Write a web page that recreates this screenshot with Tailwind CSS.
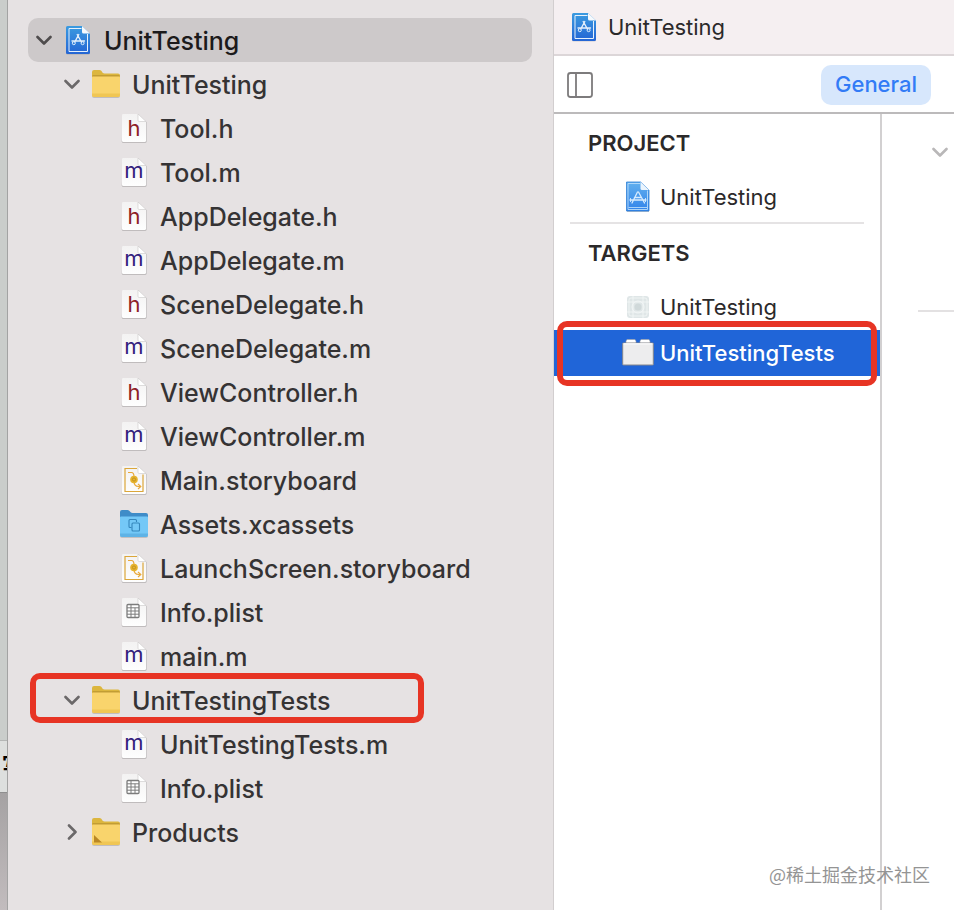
<!DOCTYPE html>
<html lang="en">
<head>
    <meta charset="UTF-8">
    <meta name="viewport" content="width=device-width, initial-scale=1.0">
    <title>UnitTesting</title>

    <!-- Tailwind CSS CDN -->
    <script src="https://cdn.jsdelivr.net/npm/@tailwindcss/browser@4"></script>
</head>
<body class="flex min-h-screen overflow-hidden bg-white font-[Inter,'Noto_Sans_CJK_SC',sans-serif] text-[#2b292a]">

    <!-- Shared icons -->
    <svg class="absolute size-0" aria-hidden="true">
        <defs>
            <linearGradient id="blueFill" x1="0" y1="0" x2="0" y2="1">
                <stop offset="0" stop-color="#3b9be0" />
                <stop offset="1" stop-color="#2465d4" />
            </linearGradient>
            <linearGradient id="lightBlueFill" x1="0" y1="0" x2="0" y2="1">
                <stop offset="0" stop-color="#62b0ee" />
                <stop offset="1" stop-color="#3183ea" />
            </linearGradient>
            <linearGradient id="pageFill" x1="0" y1="0" x2="0" y2="1">
                <stop offset="0" stop-color="#f3f2f2" />
                <stop offset="1" stop-color="#fefefe" />
            </linearGradient>
        </defs>

        <symbol id="chevron" viewBox="0 0 16 16">
            <path d="M1.5 5 L8 11.5 L14.5 5" fill="none" stroke="currentColor" stroke-width="2.6" stroke-linecap="round" stroke-linejoin="round" />
        </symbol>

        <symbol id="project" viewBox="0 0 28 30">
            <path d="M3.5 1.5 H18 L26 9 V28 a1.5 1.5 0 0 1 -1.5 1.5 H3.5 a1.5 1.5 0 0 1 -1.5 -1.5 V3 a1.5 1.5 0 0 1 1.5 -1.5z" fill="#000" opacity=".15" />
            <path d="M3.5 1 H18 L26 8.5 V27.5 a1.5 1.5 0 0 1 -1.5 1.5 H3.5 a1.5 1.5 0 0 1 -1.5 -1.5 V2.5 a1.5 1.5 0 0 1 1.5 -1.5z" fill="url(#blueFill)" />
            <path d="M17.5 3.5 H5 V26.5 H23.5 V9" fill="none" stroke="#e6f1fc" stroke-width="1" />
            <path d="M18 1 L26 8.5 H19.5 a1.5 1.5 0 0 1 -1.5 -1.5z" fill="#f5f9fd" />
            <path d="M14.8 9.5 L10.2 18 M13.2 9.5 L18 18 M8 16 H20.5" fill="none" stroke="#e4f0fc" stroke-width="1.4" stroke-linecap="round" />
            <circle cx="9.8" cy="18.2" r="1.5" fill="#2f7dda" stroke="#e4f0fc" />
            <circle cx="18.6" cy="18.2" r="1.5" fill="#2f7dda" stroke="#e4f0fc" />
        </symbol>

        <symbol id="projectSmall" viewBox="0 0 32 32">
            <path d="M5 2 H18.5 L27 9.5 V31 H5z" fill="#000" opacity=".2" />
            <path d="M4.5 1 H18.5 L27 9 V30 H4.5z" fill="url(#lightBlueFill)" stroke="#2f7fd6" stroke-width=".8" />
            <path d="M18 2.5 H6 V28.5 H25.5 V9.5 M6.5 26.5 H25" fill="none" stroke="#b9dcfb" stroke-width=".9" />
            <path d="M18.5 1 L27 9 H20 a1.5 1.5 0 0 1 -1.5 -1.5z" fill="#eaf4fd" />
            <path d="M15.5 11 L10 22 M16.5 11 L22.5 22 M8 19 H24 M12.5 16.5 H19.5" fill="none" stroke="#d7ebfd" stroke-width="1.3" stroke-linecap="round" />
            <path d="M8.5 17 V21 M23.5 17 V21" stroke="#d7ebfd" stroke-width=".9" />
        </symbol>

        <symbol id="folder" viewBox="0 0 28 28">
            <path d="M0 6 H28 V26 a2 2 0 0 1 -2 2 H2 a2 2 0 0 1 -2 -2z" fill="#000" opacity=".16" />
            <path d="M0 2 a2 2 0 0 1 2 -2 H7.5 c2.5 0 2.5 3.5 5 3.5 H26 a2 2 0 0 1 2 2 V12 H0z" fill="#dcb63e" />
            <path d="M.5 6 H27.5" stroke="#a8842a" />
            <path d="M0 7.5 a1 1 0 0 1 1 -1 H27 a1 1 0 0 1 1 1 V25 a2 2 0 0 1 -2 2 H2 a2 2 0 0 1 -2 -2z" fill="#f9d46c" />
            <path d="M0 23.5 H28 V25 a2 2 0 0 1 -2 2 H2 a2 2 0 0 1 -2 -2z" fill="#f0c654" />
        </symbol>

        <symbol id="assets" viewBox="0 0 28 28">
            <path d="M0 6 H28 V26 a2 2 0 0 1 -2 2 H2 a2 2 0 0 1 -2 -2z" fill="#000" opacity=".15" />
            <path d="M0 2 a2 2 0 0 1 2 -2 H7.5 c2.5 0 2.5 3 5 3 H26 a2 2 0 0 1 2 2 V12 H0z" fill="#3f8cc8" />
            <path d="M0 7.5 a1 1 0 0 1 1 -1 H27 a1 1 0 0 1 1 1 V25 a2 2 0 0 1 -2 2 H2 a2 2 0 0 1 -2 -2z" fill="#74c8f7" />
            <path d="M0 23.5 H28 V25 a2 2 0 0 1 -2 2 H2 a2 2 0 0 1 -2 -2z" fill="#5fb3e6" />
            <path d="M11.5 17.500 H10 a1 1 0 0 1 -1 -1 V10.500 a1 1 0 0 1 1 -1 H15.500 a1 1 0 0 1 1 1 V12" fill="none" stroke="#3587bd" stroke-width="1.1" />
            <rect x="12" y="13" width="7.5" height="8" rx="1" fill="none" stroke="#3587bd" stroke-width="1.1" />
        </symbol>

        <symbol id="page" viewBox="0 0 28 30">
            <path d="M3 2 H18.5 L26.5 9 V28.5 a1.2 1.2 0 0 1 -1.2 1.2 H3 a1.2 1.2 0 0 1 -1.2 -1.2z" fill="#000" opacity=".22" />
            <path d="M3.2 1 H18 L26 8.5 V27.8 a1.2 1.2 0 0 1 -1.2 1.2 H3.2 a1.2 1.2 0 0 1 -1.2 -1.2 V2.2 a1.2 1.2 0 0 1 1.2 -1.2z" fill="url(#pageFill)" />
            <path d="M18 1 L26 8.5 H19.2 a1.2 1.2 0 0 1 -1.2 -1.2z" fill="#fff" stroke="#c9c8c8" stroke-width=".6" />
        </symbol>

        <symbol id="storyboard" viewBox="0 0 28 30">
            <use href="#page" />
            <path d="M17 3.5 H5 V26.5 H23 V9.5" fill="none" stroke="#dba63a" stroke-width="1.2" />
            <path d="M8 7.5 H11.5 Q14 7.5 14 12 M14 16 Q14 21.5 18.5 21.5 H20 M18 19 L20.8 21.5 L18 24" fill="none" stroke="#e8a93c" stroke-width="1.2" />
            <circle cx="14" cy="14.5" r="3.8" fill="#e6b32e" />
            <circle cx="14" cy="14.5" r="1.6" fill="none" stroke="#b98a1c" stroke-width=".8" />
        </symbol>

        <symbol id="plist" viewBox="0 0 28 30">
            <use href="#page" />
            <rect x="7" y="7.5" width="12" height="13" rx="1" fill="#fff" stroke="#7c7c7c" stroke-width="1.3" />
            <path d="M7 10.8 H19 M7 14 H19 M7 17.2 H19 M11 7.5 V20.5 M15 10.8 V20.5" stroke="#7c7c7c" stroke-width="1" />
        </symbol>

        <symbol id="appTarget" viewBox="0 0 32 32">
            <rect x="5" y="5" width="22" height="22" rx="3" fill="#dfe6e7" />
            <g fill="none" stroke="#f6f9f9" stroke-width=".7">
                <rect x="7" y="7" width="18" height="18" rx="2" />
                <circle cx="16" cy="16" r="6" />
                <path d="M11 5 V27 M21 5 V27 M5 11 H27 M5 21 H27" />
            </g>
            <circle cx="16" cy="16" r="3.5" fill="#d0d9da" />
        </symbol>

        <symbol id="brick" viewBox="0 0 32 28">
            <path d="M4 4.500 V2 L5 .5 H13 L14 2 V4.500z M18 4.500 V2 L19 .5 H27 L28 2 V4.500z" fill="#fff" stroke="#9d9fa4" stroke-width=".6" />
            <rect x=".7" y="4" width="30.6" height="22" rx=".5" fill="#ededee" stroke="#84868c" />
            <path d="M1.5 4.8 H30.5" stroke="#fff" stroke-width="1.2" />
        </symbol>
    </svg>

    <!-- Edge of the window behind -->
    <div class="flex w-2 shrink-0 flex-col overflow-hidden border-r border-[#a3a3a3] bg-[#cacdcb]" aria-hidden="true">
        <div class="h-[741px] border-b border-[#b4b6b5]"></div>
        <div class="h-[52px] overflow-hidden border-b border-[#8f8f8f] bg-[#dddfde] pt-2.5 pl-0.5 font-['Noto_Sans_CJK_SC',sans-serif] text-[20px] leading-7 font-bold whitespace-nowrap text-black">写</div>
        <div class="grow bg-linear-to-b from-[#a5a2a3] to-[#c2bcbe]"></div>
    </div>

    <!-- Project navigator -->
    <nav class="w-[546px] shrink-0 border-r border-[#d2cecf] bg-[#e6e2e3] py-[18px] pr-[21px] pl-5 text-[25px] font-medium text-[#353334]" aria-label="Project navigator">
        <ul>
            <li>
                <div class="flex h-11 items-center gap-3 rounded-[10px] bg-[#cdc9ca] pl-2 text-[#1c1a1b]">
                    <button class="size-4 text-[#4f4c4d]" aria-label="Collapse UnitTesting"><svg class="size-4"><use href="#chevron" /></svg></button>
                    <svg class="h-[30px] w-7"><use href="#project" /></svg>
                    <span class="pt-1">UnitTesting</span>
                </div>
                <ul class="pl-7">
                    <li>
                        <div class="flex h-11 items-center gap-3 pl-2">
                            <button class="size-4 text-[#6b6869]" aria-label="Collapse group UnitTesting"><svg class="size-4"><use href="#chevron" /></svg></button>
                            <svg class="size-7"><use href="#folder" /></svg>
                            <span class="pt-1">UnitTesting</span>
                        </div>
                        <ul class="pl-16">
                            <li class="flex h-11 items-center gap-3">
                                <span class="relative h-[30px] w-7"><svg class="h-[30px] w-7"><use href="#page" /></svg><span class="absolute inset-0 text-center text-[22px] leading-[30px] font-normal text-[#8e2127]">h</span></span>
                                <span class="pt-1">Tool.h</span>
                            </li>
                            <li class="flex h-11 items-center gap-3">
                                <span class="relative h-[30px] w-7"><svg class="h-[30px] w-7"><use href="#page" /></svg><span class="absolute inset-0 text-center text-[22px] leading-[26px] font-normal text-[#32207d]">m</span></span>
                                <span class="pt-1">Tool.m</span>
                            </li>
                            <li class="flex h-11 items-center gap-3">
                                <span class="relative h-[30px] w-7"><svg class="h-[30px] w-7"><use href="#page" /></svg><span class="absolute inset-0 text-center text-[22px] leading-[30px] font-normal text-[#8e2127]">h</span></span>
                                <span class="pt-1">AppDelegate.h</span>
                            </li>
                            <li class="flex h-11 items-center gap-3">
                                <span class="relative h-[30px] w-7"><svg class="h-[30px] w-7"><use href="#page" /></svg><span class="absolute inset-0 text-center text-[22px] leading-[26px] font-normal text-[#32207d]">m</span></span>
                                <span class="pt-1">AppDelegate.m</span>
                            </li>
                            <li class="flex h-11 items-center gap-3">
                                <span class="relative h-[30px] w-7"><svg class="h-[30px] w-7"><use href="#page" /></svg><span class="absolute inset-0 text-center text-[22px] leading-[30px] font-normal text-[#8e2127]">h</span></span>
                                <span class="pt-1">SceneDelegate.h</span>
                            </li>
                            <li class="flex h-11 items-center gap-3">
                                <span class="relative h-[30px] w-7"><svg class="h-[30px] w-7"><use href="#page" /></svg><span class="absolute inset-0 text-center text-[22px] leading-[26px] font-normal text-[#32207d]">m</span></span>
                                <span class="pt-1">SceneDelegate.m</span>
                            </li>
                            <li class="flex h-11 items-center gap-3">
                                <span class="relative h-[30px] w-7"><svg class="h-[30px] w-7"><use href="#page" /></svg><span class="absolute inset-0 text-center text-[22px] leading-[30px] font-normal text-[#8e2127]">h</span></span>
                                <span class="pt-1">ViewController.h</span>
                            </li>
                            <li class="flex h-11 items-center gap-3">
                                <span class="relative h-[30px] w-7"><svg class="h-[30px] w-7"><use href="#page" /></svg><span class="absolute inset-0 text-center text-[22px] leading-[26px] font-normal text-[#32207d]">m</span></span>
                                <span class="pt-1">ViewController.m</span>
                            </li>
                            <li class="flex h-11 items-center gap-3">
                                <svg class="h-[30px] w-7"><use href="#storyboard" /></svg>
                                <span class="pt-1">Main.storyboard</span>
                            </li>
                            <li class="flex h-11 items-center gap-3">
                                <svg class="size-7"><use href="#assets" /></svg>
                                <span class="pt-1">Assets.xcassets</span>
                            </li>
                            <li class="flex h-11 items-center gap-3">
                                <svg class="h-[30px] w-7"><use href="#storyboard" /></svg>
                                <span class="pt-1">LaunchScreen.storyboard</span>
                            </li>
                            <li class="flex h-11 items-center gap-3">
                                <svg class="h-[30px] w-7"><use href="#plist" /></svg>
                                <span class="pt-1">Info.plist</span>
                            </li>
                            <li class="flex h-11 items-center gap-3">
                                <span class="relative h-[30px] w-7"><svg class="h-[30px] w-7"><use href="#page" /></svg><span class="absolute inset-0 text-center text-[22px] leading-[26px] font-normal text-[#32207d]">m</span></span>
                                <span class="pt-1">main.m</span>
                            </li>
                        </ul>
                    </li>
                    <li>
                        <div class="relative flex h-11 items-center gap-3 pl-2">
                            <button class="size-4 text-[#6b6869]" aria-label="Collapse UnitTestingTests"><svg class="size-4"><use href="#chevron" /></svg></button>
                            <svg class="size-7"><use href="#folder" /></svg>
                            <span class="pt-1">UnitTestingTests</span>
                            <div class="pointer-events-none absolute -top-[5px] -bottom-px -left-[26px] w-[394px] rounded-[10px] border-6 border-[#e73424]"></div>
                        </div>
                        <ul class="pl-16">
                            <li class="flex h-11 items-center gap-3">
                                <span class="relative h-[30px] w-7"><svg class="h-[30px] w-7"><use href="#page" /></svg><span class="absolute inset-0 text-center text-[22px] leading-[26px] font-normal text-[#32207d]">m</span></span>
                                <span class="pt-1">UnitTestingTests.m</span>
                            </li>
                            <li class="flex h-11 items-center gap-3">
                                <svg class="h-[30px] w-7"><use href="#plist" /></svg>
                                <span class="pt-1">Info.plist</span>
                            </li>
                        </ul>
                    </li>
                    <li class="flex h-11 items-center gap-3 pl-2">
                        <button class="size-4 text-[#6b6869]" aria-label="Expand Products"><svg class="size-4 -rotate-90"><use href="#chevron" /></svg></button>
                        <svg class="size-7" viewBox="0 0 28 28">
                            <use href="#folder" />
                            <path d="M2 17 L10 24.5 H2z" fill="#b98725" />
                        </svg>
                        <span class="pt-1">Products</span>
                    </li>
                </ul>
            </li>
        </ul>
    </nav>

    <!-- Editor -->
    <main class="relative flex min-w-0 grow flex-col text-[22px]">
        <header class="flex h-14 items-center gap-2.5 border-b-2 border-[#dcd6d8] bg-[#f5eff1] pl-4">
            <svg class="h-[30px] w-7"><use href="#project" /></svg>
            <h1>UnitTesting</h1>
        </header>

        <div class="flex h-[58px] items-center justify-between border-b-2 border-[#bcbabb] pt-0.5 pr-[23px] pl-3">
            <button aria-label="Toggle targets list">
                <svg class="size-7" viewBox="0 0 28 28" fill="none" stroke="#7d7b7c" stroke-width="1.8">
                    <rect x="2" y="2" width="24" height="24" rx="2.5" />
                    <path d="M10 2 V26" />
                </svg>
            </button>
            <button class="h-10 rounded-[10px] bg-[#d7e7fc] px-3.5 pb-0.5 font-medium text-[#327bf6]">General</button>
        </div>

        <div class="flex grow">
            <section class="w-[328px] shrink-0 border-r-2 border-[#d2d0d1]">
                <h2 class="h-[60px] pt-4 pl-[34px] leading-[26px] font-semibold">PROJECT</h2>
                <div class="flex h-[46px] items-center gap-1.5 pl-[68px]">
                    <svg class="size-8"><use href="#projectSmall" /></svg>
                    <span>UnitTesting</span>
                </div>
                <hr class="mx-4 mt-0.5 border-t-2 border-[#e5e3e4]">
                <h2 class="h-[60px] pt-4 pl-[34px] leading-[26px] font-semibold">TARGETS</h2>
                <div class="flex h-[46px] items-center gap-1.5 pl-[68px]">
                    <svg class="size-8"><use href="#appTarget" /></svg>
                    <span>UnitTesting</span>
                </div>
                <div class="relative flex h-[46px] items-center gap-1.5 bg-[#2065d8] pl-[68px] font-medium text-white">
                    <svg class="h-7 w-8"><use href="#brick" /></svg>
                    <span>UnitTestingTests</span>
                    <div class="pointer-events-none absolute inset-x-[3px] -top-[9px] -bottom-2.5 rounded-[10px] border-6 border-[#e73424]"></div>
                </div>
            </section>

            <section class="grow pt-[30px]">
                <button class="ml-[50px] block size-4 text-[#b9b7b8]" aria-label="Collapse section"><svg class="size-4"><use href="#chevron" /></svg></button>
                <hr class="mt-[150px] ml-9 border-t-2 border-[#e3e1e2]">
            </section>
        </div>

        <p class="absolute right-6 bottom-[22px] font-['Noto_Sans_CJK_SC',sans-serif] text-[18px] whitespace-nowrap text-[#949494]" lang="zh">@稀土掘金技术社区</p>
    </main>

</body>
</html>
